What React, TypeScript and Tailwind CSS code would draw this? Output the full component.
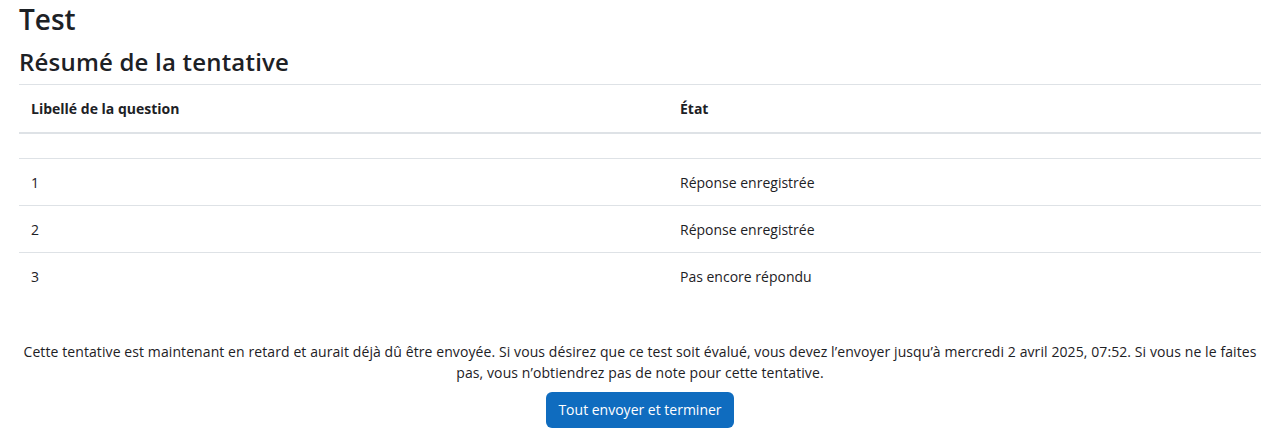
export default function App() {
  const rows = [
    { q: "1", s: "Réponse enregistrée" },
    { q: "2", s: "Réponse enregistrée" },
    { q: "3", s: "Pas encore répondu" },
  ];
  return (
    <div className="bg-white min-h-screen pl-[19px] pr-[15px] text-[#1d2125] font-['Open_Sans',sans-serif]">
      <h1 className="text-[28px] leading-[36px] font-semibold pt-[1px]">Test</h1>
      <h2 className="text-[24px] leading-[30px] font-semibold tracking-[0.2px] mt-[10px] mb-[7px]">Résumé de la tentative</h2>
      <table className="w-full text-[14px] border-collapse">
        <thead>
          <tr className="border-t border-[#dee2e6] border-b-2">
            <th className="text-left font-bold px-[12px] h-[48px] w-[649px]">Libellé de la question</th>
            <th className="text-left font-bold px-[12px] h-[48px]">État</th>
          </tr>
        </thead>
        <tbody>
          <tr className="border-b border-[#dee2e6]">
            <td className="h-[26px]" colSpan={2}></td>
          </tr>
          {rows.map((r, i) => (
            <tr key={r.q} className={i < rows.length - 1 ? "border-b border-[#dee2e6]" : ""}>
              <td className="px-[12px] h-[47px]">{r.q}</td>
              <td className="px-[12px] h-[47px]">{r.s}</td>
            </tr>
          ))}
        </tbody>
      </table>
      <div className="mt-[41px] text-center text-[14px] leading-[21px]">
        <p className="tracking-[0.09px]">
          Cette tentative est maintenant en retard et aurait déjà dû être envoyée. Si vous désirez que ce test soit évalué, vous devez l’envoyer jusqu’à mercredi 2 avril 2025, 07:52. Si vous ne le faites pas, vous n’obtiendrez pas de note pour cette tentative.
        </p>
        <button className="mt-[9px] bg-[#0f6cbf] text-white rounded-[6px] h-[36px] px-[12px] w-[188px] text-[14px]">
          Tout envoyer et terminer
        </button>
      </div>
    </div>
  );
}
